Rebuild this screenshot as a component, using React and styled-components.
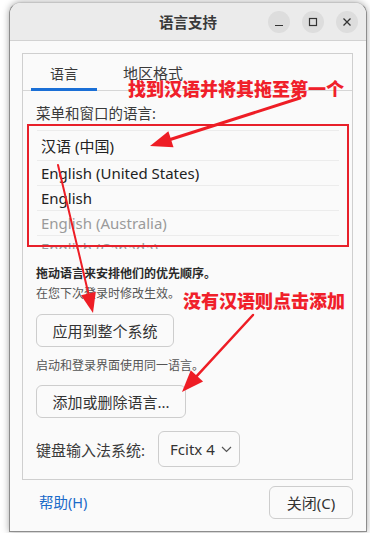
import React from 'react';
import styled, { createGlobalStyle } from 'styled-components';

const GlobalStyle = createGlobalStyle`
  html, body {
    margin: 0;
    padding: 0;
    background: #ffffff;
  }
  body {
    font-family: "Noto Sans", "Noto Sans CJK SC", sans-serif;
    color: #303030;
  }
`;

const Page = styled.div`
  position: relative;
  width: 370px;
  height: 533px;
  overflow: hidden;
  padding: 2px 0 0 9px;
  box-sizing: border-box;
`;

const Window = styled.div`
  width: 358px;
  height: 530px;
  box-sizing: border-box;
  border: 1px solid #8d8d8d;
  border-top-color: #c4c4c4;
  border-radius: 12px 12px 0 0;
  background: #fafafa;
  box-shadow: 0 0 7px rgba(0, 0, 0, 0.35);
  display: flex;
  flex-direction: column;
  overflow: hidden;
`;

const TitleBar = styled.div`
  height: 37px;
  flex: none;
  background: #ebebeb;
  border-bottom: 1px solid #d2d2d2;
  position: relative;
  display: flex;
  align-items: center;
  justify-content: center;
`;

const Title = styled.div`
  font-size: 14.5px;
  font-weight: bold;
  color: #3a3a3a;
`;

const Controls = styled.div`
  position: absolute;
  right: 8px;
  top: 8px;
  display: flex;
  gap: 12px;
`;

const CircleButton = styled.div`
  width: 22px;
  height: 22px;
  border-radius: 50%;
  background: #dddddd;
  display: flex;
  align-items: center;
  justify-content: center;
`;

const Body = styled.div`
  flex: 1;
  display: flex;
  flex-direction: column;
  padding: 12px 13px 0 12px;
`;

const Panel = styled.div`
  height: 427px;
  box-sizing: border-box;
  border: 1px solid #cfcfcf;
  background: #fafafa;
  display: flex;
  flex-direction: column;
`;

const TabBar = styled.div`
  height: 36px;
  flex: none;
  border-bottom: 1px solid #d6d6d6;
  display: flex;
  padding-left: 8px;
`;

const Tab = styled.div`
  width: ${p => p.$w}px;
  display: flex;
  align-items: center;
  justify-content: center;
  font-size: ${p => p.$size}px;
  color: #3a3a3a;
  box-sizing: border-box;
  border-bottom: 3px solid ${p => (p.$active ? '#1a6fd6' : 'transparent')};
  padding-top: 3px;
  margin-bottom: -1px;
`;

const Content = styled.div`
  display: flex;
  flex-direction: column;
  align-items: flex-start;
  padding: 9px 13px 0 13px;
`;

const Label = styled.div`
  font-size: 14.5px;
  line-height: 26px;
  color: #3a3a3a;
`;

const LangList = styled.div`
  margin-top: 4px;
  height: 118px;
  overflow: hidden;
  border-top: 1px solid #ececec;
  align-self: stretch;
  margin-left: 1px;
`;

const LangRow = styled.div`
  height: ${p => p.$h}px;
  box-sizing: border-box;
  border-bottom: 1px solid #ececec;
  display: flex;
  align-items: center;
  padding-left: 4px;
  font-size: 15px;
  color: ${p => (p.$dim ? '#9a9a9a' : '#222222')};
`;

const Hint = styled.div`
  font-size: 12px;
  line-height: 20px;
  color: ${p => (p.$strong ? '#2a2a2a' : '#555555')};
  font-weight: ${p => (p.$strong ? 'bold' : 'normal')};
  margin-top: ${p => p.$mt || 0}px;
`;

const Button = styled.div`
  margin-top: ${p => p.$mt || 0}px;
  height: 33px;
  width: ${p => p.$w}px;
  box-sizing: border-box;
  border: 1px solid #cdcdcd;
  border-radius: 6px;
  background: #fafafa;
  display: flex;
  align-items: center;
  justify-content: center;
  font-size: 15px;
  color: #333333;
`;

const KeyboardRow = styled.div`
  margin-top: 13px;
  display: flex;
  align-items: center;
  gap: 13px;
`;

const KeyLabel = styled.div`
  font-size: 15px;
  color: #3a3a3a;
`;

const Dropdown = styled.div`
  height: 36px;
  width: 82px;
  box-sizing: border-box;
  border: 1px solid #cdcdcd;
  border-radius: 6px;
  display: flex;
  align-items: center;
  padding-left: 11px;
  gap: 6px;
  font-size: 15px;
  color: #333333;
`;

const Footer = styled.div`
  flex: 1;
  display: flex;
  align-items: flex-start;
  justify-content: space-between;
  padding: 6px 0 0 17px;
`;

const HelpLink = styled.div`
  font-size: 14.5px;
  color: #1b6ac9;
  line-height: 33px;
`;

const Overlay = styled.svg`
  position: absolute;
  left: 0;
  top: 0;
  pointer-events: none;
`;

const Note = styled.div`
  position: absolute;
  left: ${p => p.$x}px;
  top: ${p => p.$y}px;
  font-size: 18px;
  font-weight: 900;
  color: #f0202a;
  font-family: "Noto Sans CJK SC", sans-serif;
  white-space: nowrap;
  line-height: 1;
`;

const Frame = styled.div`
  position: absolute;
  left: 27px;
  top: 124px;
  width: 322px;
  height: 123px;
  box-sizing: border-box;
  border: 2px solid #e8202a;
`;

function Arrow({ x1, y1, x2, y2, w, head }) {
  const dx = x2 - x1;
  const dy = y2 - y1;
  const len = Math.hypot(dx, dy);
  const ux = dx / len;
  const uy = dy / len;
  const bx = x2 - ux * head;
  const by = y2 - uy * head;
  const px = -uy * head * 0.38;
  const py = ux * head * 0.38;
  return (
    <g>
      <line x1={x1} y1={y1} x2={bx} y2={by} stroke="#ee1d25" strokeWidth={w} strokeLinecap="round" />
      <polygon points={`${x2},${y2} ${bx + px},${by + py} ${bx - px},${by - py}`} fill="#ee1d25" />
    </g>
  );
}

export default function App() {
  const langs = [
    { name: '汉语 (中国)', h: 30 },
    { name: 'English (United States)', h: 25 },
    { name: 'English', h: 25 },
    { name: 'English (Australia)', h: 25, dim: true },
    { name: 'English (Canada)', h: 25, dim: true },
  ];

  return (
    <>
      <GlobalStyle />
      <Page>
        <Window>
          <TitleBar>
            <Title>语言支持</Title>
            <Controls>
              <CircleButton>
                <svg width="10" height="10" viewBox="0 0 10 10">
                  <line x1="1" y1="8.5" x2="9" y2="8.5" stroke="#333" strokeWidth="1.2" />
                </svg>
              </CircleButton>
              <CircleButton>
                <svg width="10" height="10" viewBox="0 0 10 10">
                  <rect x="1.5" y="1.5" width="7" height="7" fill="none" stroke="#333" strokeWidth="1.2" />
                </svg>
              </CircleButton>
              <CircleButton>
                <svg width="10" height="10" viewBox="0 0 10 10">
                  <path d="M1.5 1.5 L8.5 8.5 M8.5 1.5 L1.5 8.5" stroke="#333" strokeWidth="1.3" />
                </svg>
              </CircleButton>
            </Controls>
          </TitleBar>
          <Body>
            <Panel>
              <TabBar>
                <Tab $w={66} $size={14} $active>语言</Tab>
                <Tab $w={112} $size={15}>地区格式</Tab>
              </TabBar>
              <Content>
                <Label>菜单和窗口的语言:</Label>
                <LangList>
                  {langs.map(l => (
                    <LangRow key={l.name} $h={l.h} $dim={l.dim}>{l.name}</LangRow>
                  ))}
                </LangList>
                <Hint $strong $mt={15}>拖动语言来安排他们的优先顺序。</Hint>
                <Hint>在您下次登录时修改生效。</Hint>
                <Button $w={138} $mt={10}>应用到整个系统</Button>
                <Hint $mt={9}>启动和登录界面使用同一语言。</Hint>
                <Button $w={150} $mt={9}>添加或删除语言...</Button>
                <KeyboardRow>
                  <KeyLabel>键盘输入法系统:</KeyLabel>
                  <Dropdown>
                    Fcitx 4
                    <svg width="11" height="7" viewBox="0 0 11 7">
                      <path d="M1 1 L5.5 5.5 L10 1" fill="none" stroke="#555" strokeWidth="1.2" />
                    </svg>
                  </Dropdown>
                </KeyboardRow>
              </Content>
            </Panel>
            <Footer>
              <HelpLink>帮助(H)</HelpLink>
              <Button $w={84}>关闭(C)</Button>
            </Footer>
          </Body>
        </Window>

        <Frame />
        <Note $x={128} $y={79}>找到汉语并将其拖至第一个</Note>
        <Note $x={183} $y={291}>没有汉语则点击添加</Note>
        <Overlay width="370" height="533" viewBox="0 0 370 533">
          <Arrow x1={300} y1={98} x2={150} y2={146} w={3} head={22} />
          <Arrow x1={58} y1={165} x2={93} y2={313} w={2} head={20} />
          <Arrow x1={253} y1={315} x2={182} y2={392} w={2.5} head={22} />
        </Overlay>
      </Page>
    </>
  );
}
